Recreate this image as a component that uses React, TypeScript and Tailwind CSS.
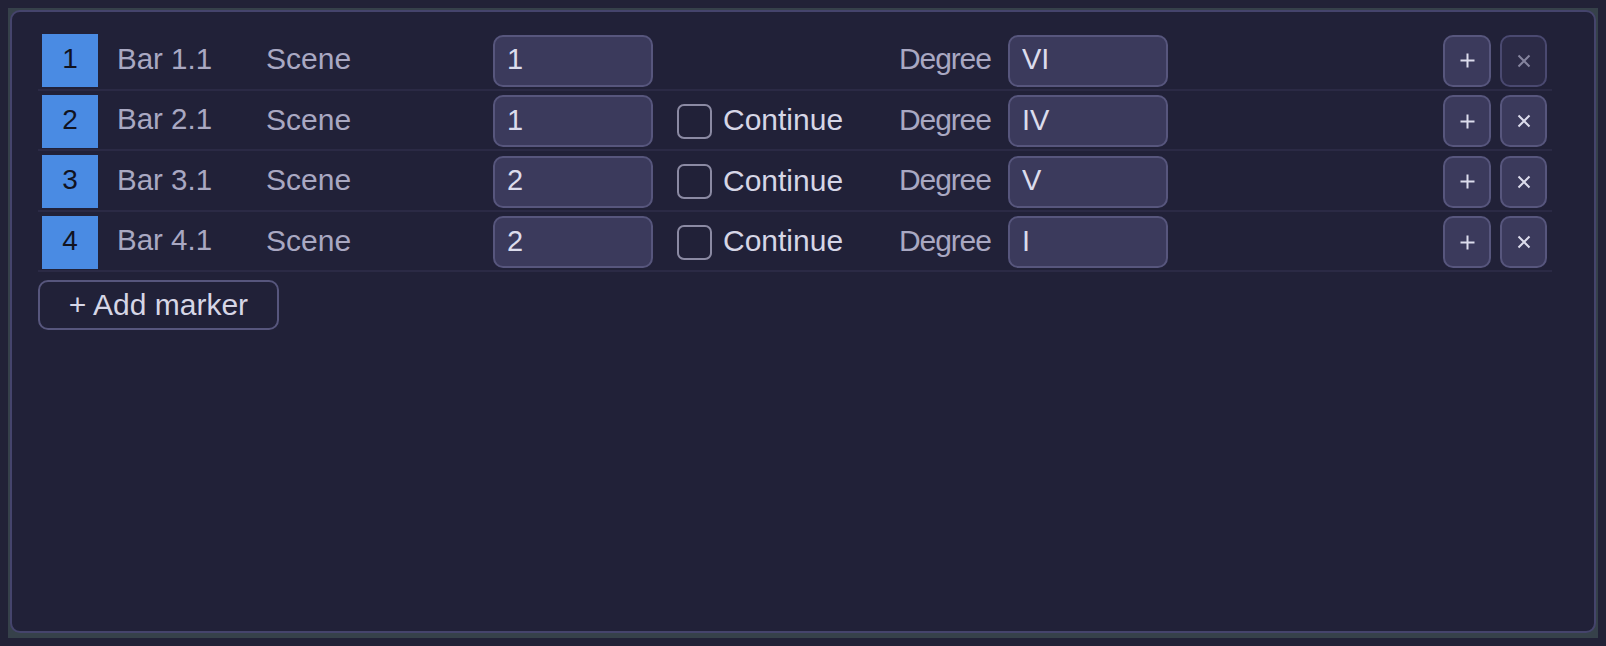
const markers = [
  { id: 1, bar: "Bar 1.1", scene: "1", degree: "VI", first: true },
  { id: 2, bar: "Bar 2.1", scene: "1", degree: "IV", first: false },
  { id: 3, bar: "Bar 3.1", scene: "2", degree: "V", first: false },
  { id: 4, bar: "Bar 4.1", scene: "2", degree: "I", first: false },
];

function PlusIcon() {
  return (
    <svg width="15" height="15" viewBox="0 0 15 15" fill="none">
      <path d="M7.5 0.5v14M0.5 7.5h14" stroke="#dcdcec" strokeWidth="2" />
    </svg>
  );
}

function CrossIcon({ dim }: { dim: boolean }) {
  return (
    <svg width="14" height="14" viewBox="0 0 14 14" fill="none">
      <path d="M1.5 1.5l11 11M12.5 1.5l-11 11" stroke={dim ? "#85849e" : "#dcdcec"} strokeWidth="2" />
    </svg>
  );
}

function MarkerRow({ m }: { m: (typeof markers)[number] }) {
  return (
    <div className="flex items-center h-[60.5px] pt-[3px] pl-[4px] pr-[5px] border-b-2 border-[#2b2a45]">
      <div className="w-[56px] h-[53px] pb-[3px] bg-[#4a8be3] flex items-center justify-center text-[28px] text-[#11131f]">
        {m.id}
      </div>
      <div className="ml-[19px] w-[149px] pb-[4px] text-[29.5px] text-[#a9a8c2]">{m.bar}</div>
      <div className="w-[227px] pb-[4px] text-[30px] text-[#a9a8c2]">Scene</div>
      <input
        readOnly
        value={m.scene}
        className="w-[160px] h-[52px] pb-[2px] rounded-[10px] border-2 border-[#57567d] bg-[#3b3a5c] pl-[12px] text-[29px] text-[#dcdcec] outline-none"
      />
      <div className="w-[246px] pl-[24px] flex items-center gap-[11px]">
        {!m.first && (
          <>
            <div className="w-[35px] h-[35px] rounded-[7px] border-2 border-[#8b8aa3]" />
            <span className="pb-[3px] text-[30px] text-[#d6d6e6]">Continue</span>
          </>
        )}
      </div>
      <div className="w-[109px] pb-[4px] text-[30px] tracking-[-1.1px] text-[#a9a8c2]">Degree</div>
      <input
        readOnly
        value={m.degree}
        className="w-[160px] h-[52px] pb-[2px] rounded-[10px] border-2 border-[#57567d] bg-[#3b3a5c] pl-[12px] text-[29px] text-[#dcdcec] outline-none"
      />
      <div className="flex-1" />
      <div className="flex gap-[9px]">
        <button className="w-[48px] h-[52px] rounded-[10px] border-2 border-[#57567d] bg-[#3b3a5c] flex items-center justify-center">
          <PlusIcon />
        </button>
        <button
          className={
            m.first
              ? "w-[47px] h-[52px] rounded-[10px] border-2 border-[#4a4970] bg-[#2c2b47] flex items-center justify-center"
              : "w-[47px] h-[52px] rounded-[10px] border-2 border-[#57567d] bg-[#3b3a5c] flex items-center justify-center"
          }
        >
          <CrossIcon dim={m.first} />
        </button>
      </div>
    </div>
  );
}

export default function App() {
  return (
    <div className="h-[646px] bg-[#222237] p-2 font-['Liberation_Sans',Arial,sans-serif]">
      <div className="h-full bg-[#36414a] pt-[2px] pl-[2px] pr-[2px] pb-[5px]">
        <div className="h-full rounded-[10px] border-2 border-[#45446c] bg-[#212138] pt-[18px] pl-[26px] pr-[42px]">
          {markers.map((m) => (
            <MarkerRow key={m.id} m={m} />
          ))}
          <button className="mt-[8px] w-[241px] h-[50px] pb-[3px] rounded-[10px] border-2 border-[#57567d] text-[30px] text-[#d6d6e6]">
            + Add marker
          </button>
        </div>
      </div>
    </div>
  );
}
